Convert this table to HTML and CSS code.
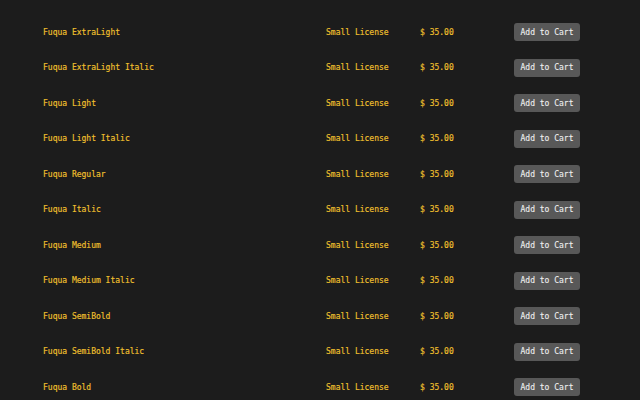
FILE: index.html
```html
<!DOCTYPE html>
<html>
<head>
<meta charset="utf-8">
<link rel="stylesheet" href="styles.css">
</head>
<body>
<div class="list">
  <div class="row"><span class="name">Fuqua ExtraLight</span><span class="lic">Small License</span><span class="price">$ 35.00</span><button class="btn">Add to Cart</button></div>
  <div class="row"><span class="name">Fuqua ExtraLight Italic</span><span class="lic">Small License</span><span class="price">$ 35.00</span><button class="btn">Add to Cart</button></div>
  <div class="row"><span class="name">Fuqua Light</span><span class="lic">Small License</span><span class="price">$ 35.00</span><button class="btn">Add to Cart</button></div>
  <div class="row"><span class="name">Fuqua Light Italic</span><span class="lic">Small License</span><span class="price">$ 35.00</span><button class="btn">Add to Cart</button></div>
  <div class="row"><span class="name">Fuqua Regular</span><span class="lic">Small License</span><span class="price">$ 35.00</span><button class="btn">Add to Cart</button></div>
  <div class="row"><span class="name">Fuqua Italic</span><span class="lic">Small License</span><span class="price">$ 35.00</span><button class="btn">Add to Cart</button></div>
  <div class="row"><span class="name">Fuqua Medium</span><span class="lic">Small License</span><span class="price">$ 35.00</span><button class="btn">Add to Cart</button></div>
  <div class="row"><span class="name">Fuqua Medium Italic</span><span class="lic">Small License</span><span class="price">$ 35.00</span><button class="btn">Add to Cart</button></div>
  <div class="row"><span class="name">Fuqua SemiBold</span><span class="lic">Small License</span><span class="price">$ 35.00</span><button class="btn">Add to Cart</button></div>
  <div class="row"><span class="name">Fuqua SemiBold Italic</span><span class="lic">Small License</span><span class="price">$ 35.00</span><button class="btn">Add to Cart</button></div>
  <div class="row"><span class="name">Fuqua Bold</span><span class="lic">Small License</span><span class="price">$ 35.00</span><button class="btn">Add to Cart</button></div>
</div>
</body>
</html>
```
FILE: styles.css
```css
html, body {
  margin: 0;
  padding: 0;
  background: #1c1c1c;
  height: 100%;
  overflow: hidden;
}
body {
  font-family: "DejaVu Sans Mono", "Liberation Mono", monospace;
  font-size: 8px;
  color: #f2c12e;
}
.list {
  padding: 14.25px 0 0 43px;
  display: flex;
  flex-direction: column;
}
.row {
  display: grid;
  grid-template-columns: 283px 94px 94px 66px;
  align-items: center;
  height: 35.5px;
}
.name, .lic, .price {
  -webkit-text-stroke: 0.15px #f2c12e;
}
.btn {
  font-family: inherit;
  font-size: 8px;
  color: #f0f0f0;
  -webkit-text-stroke: 0.1px #f0f0f0;
  background: #585858;
  border: none;
  border-radius: 3px;
  width: 66px;
  height: 18px;
  padding: 0;
  margin: 0;
}
```
